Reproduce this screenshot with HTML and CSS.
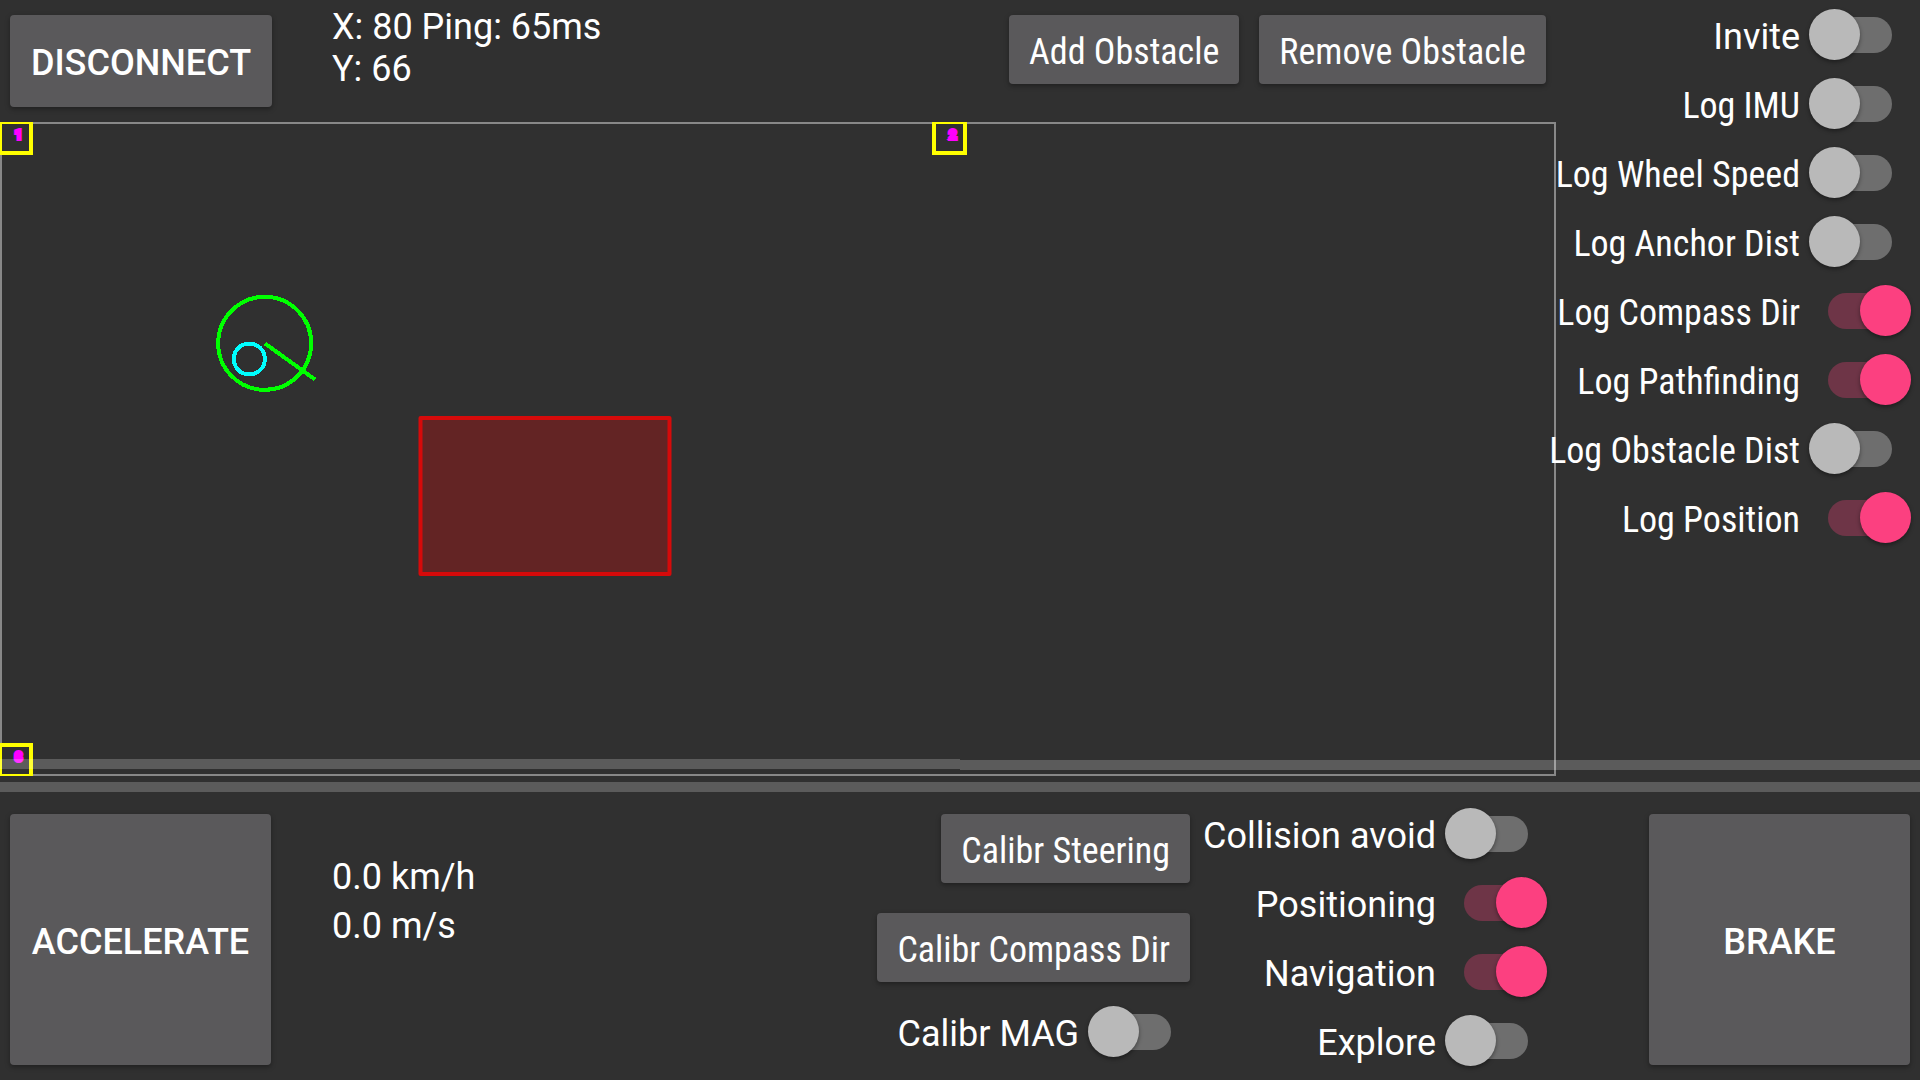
FILE: index.html
```html
<!DOCTYPE html>
<html lang="en">
<head>
<meta charset="utf-8">
<meta name="viewport" content="width=device-width, initial-scale=1">
<title>Vehicle control</title>
<link rel="stylesheet" href="styles.css">
</head>
<body>
<main class="page">
  <section class="upper">
    <div class="field">
      <header class="topbar">
        <button class="btn btn-strong btn-disconnect" type="button">DISCONNECT</button>
        <div class="readout">X: 80 Ping: 65ms<br>Y: 66</div>
        <div class="obstacles">
          <button class="btn narrow" type="button">Add Obstacle</button>
          <button class="btn narrow" type="button">Remove Obstacle</button>
        </div>
      </header>
      <svg class="map" viewBox="0 0 1556 654" role="img" aria-label="Map">
        <rect class="bounds" x="0" y="0" width="1556" height="654"/>
        <g class="anchor">
          <rect x="0" y="0" width="31" height="31"/>
          <rect x="934" y="0" width="31" height="31"/>
          <rect x="0" y="623" width="31" height="31"/>
        </g>
        <g class="anchor-id">
          <text x="15" y="17">1</text>
          <text x="949" y="17">2</text>
          <text x="15" y="639">3</text>
        </g>
        <rect class="obstacle" x="420.5" y="296" width="249" height="156"/>
        <circle class="vehicle" cx="264.7" cy="221.3" r="46.5"/>
        <path class="vehicle" d="M265 221.500L315 257.500"/>
        <circle class="target" cx="249.300" cy="237" r="15.500"/>
      </svg>
    </div>
    <div class="switches logs">
      <label class="row"><span>Invite</span><input class="switch" type="checkbox"></label>
      <label class="row narrow"><span>Log IMU</span><input class="switch" type="checkbox"></label>
      <label class="row narrow"><span>Log Wheel Speed</span><input class="switch" type="checkbox"></label>
      <label class="row narrow"><span>Log Anchor Dist</span><input class="switch" type="checkbox"></label>
      <label class="row narrow"><span>Log Compass Dir</span><input class="switch" type="checkbox" checked></label>
      <label class="row narrow"><span>Log Pathfinding</span><input class="switch" type="checkbox" checked></label>
      <label class="row narrow"><span>Log Obstacle Dist</span><input class="switch" type="checkbox"></label>
      <label class="row narrow"><span>Log Position</span><input class="switch" type="checkbox" checked></label>
    </div>
    <div class="meter meter-left"></div>
    <div class="meter meter-right"></div>
  </section>
  <div class="meter meter-full"></div>
  <section class="lower">
    <button class="btn btn-strong btn-pedal" type="button">ACCELERATE</button>
    <div class="speed">0.0 km/h<br>0.0 m/s</div>
    <div class="calibration">
      <button class="btn narrow" type="button">Calibr Steering</button>
      <button class="btn narrow" type="button">Calibr Compass Dir</button>
      <label class="row"><span>Calibr MAG</span><input class="switch" type="checkbox"></label>
    </div>
    <div class="switches modes">
      <label class="row"><span>Collision avoid</span><input class="switch" type="checkbox"></label>
      <label class="row"><span>Positioning</span><input class="switch" type="checkbox" checked></label>
      <label class="row"><span>Navigation</span><input class="switch" type="checkbox" checked></label>
      <label class="row"><span>Explore</span><input class="switch" type="checkbox"></label>
    </div>
    <button class="btn btn-strong btn-pedal" type="button">BRAKE</button>
  </section>
</main>
</body>
</html>
```
FILE: styles.css
```css
* {
  box-sizing: border-box;
}

body {
  margin: 0;
  background: #303030;
  color: #fff;
  font: 36px/42px Roboto, sans-serif;
}

.page {
  display: flex;
  flex-direction: column;
  min-height: 100vh;
}

.narrow {
  font-family: "Roboto Condensed", Roboto, sans-serif;
}

/* Buttons */

.btn {
  height: 69px;
  padding: 4px 20px 0;
  border: 0;
  border-radius: 4px;
  background: #5a595b;
  box-shadow: 0 2px 5px rgba(0, 0, 0, 0.35);
  color: #fff;
  font-size: 36px;
  line-height: 42px;
  white-space: nowrap;
}

.btn-strong {
  padding: 4px 0 0;
  font-family: Roboto, sans-serif;
  font-weight: 500;
}

.btn-disconnect {
  width: 262px;
  height: 92px;
}

.btn-pedal {
  width: 261px;
  height: 251px;
  margin-top: 15px;
}

/* Map area with its toolbar */

.upper {
  position: relative;
  display: flex;
}

.field {
  flex: 1;
  min-width: 0;
}

.topbar {
  display: flex;
  align-items: flex-start;
  height: 122px;
  padding: 15px 10px 0;
}

.readout {
  margin: -9px 0 0 60px;
}

.obstacles {
  display: flex;
  gap: 20px;
  margin-left: auto;
}

.map {
  display: block;
  width: 100%;
}

.bounds {
  fill: none;
  stroke: #888;
  stroke-width: 4;
}

.anchor {
  fill: none;
  stroke: #ff0;
  stroke-width: 4;
}

.anchor-id {
  fill: #f0f;
  stroke: #f0f;
  stroke-width: 4;
  font-size: 13px;
}

.obstacle {
  fill: #632424;
  stroke: #d60a0a;
  stroke-width: 4;
  stroke-linejoin: round;
}

.vehicle,
.target {
  fill: none;
  stroke: #0f0;
  stroke-width: 4;
  shape-rendering: crispEdges;
}

.target {
  stroke: #0ff;
}

/* Switches */

.logs {
  width: 364px;
  padding-right: 9px;
}

.row {
  display: flex;
  align-items: center;
  justify-content: flex-end;
  gap: 9px;
  height: 69px;
  white-space: nowrap;
}

.row span {
  position: relative;
  padding-top: 4px;
}

.switch {
  position: relative;
  display: flex;
  flex: none;
  align-items: center;
  width: 102px;
  height: 51px;
  margin: 0 0 1px;
  appearance: none;
}

.switch::before {
  content: "";
  position: absolute;
  inset: 8px 19px 7px;
  border-radius: 18px;
  background: #6e6e6e;
}

.switch::after {
  content: "";
  position: relative;
  width: 51px;
  height: 51px;
  border-radius: 50%;
  background: #b9b9b9;
  box-shadow: 0 2px 4px rgba(0, 0, 0, 0.4);
}

.switch:checked {
  justify-content: flex-end;
}

.switch:checked::before {
  background: #6e3547;
}

.switch:checked::after {
  background: #fc4080;
}

/* Level meters lie translucently over the map */

.meter {
  height: 10px;
  background: rgba(255, 255, 255, 0.21);
}

.meter-left {
  position: absolute;
  bottom: 7px;
  left: 0;
  width: 50%;
}

.meter-right {
  position: absolute;
  right: 0;
  bottom: 6px;
  width: 50%;
}

.meter-full {
  margin-top: 6px;
}

/* Driving controls */

.lower {
  display: flex;
  align-items: flex-start;
  padding: 7px 10px 0;
}

.speed {
  margin: 54px auto 0 61px;
  line-height: 49px;
}

.calibration {
  display: flex;
  flex-direction: column;
  align-items: flex-end;
  gap: 30px;
  padding-top: 15px;
}

.calibration .row {
  margin-top: -15px;
}

.modes {
  width: 357px;
  margin-right: 102px;
}
```
